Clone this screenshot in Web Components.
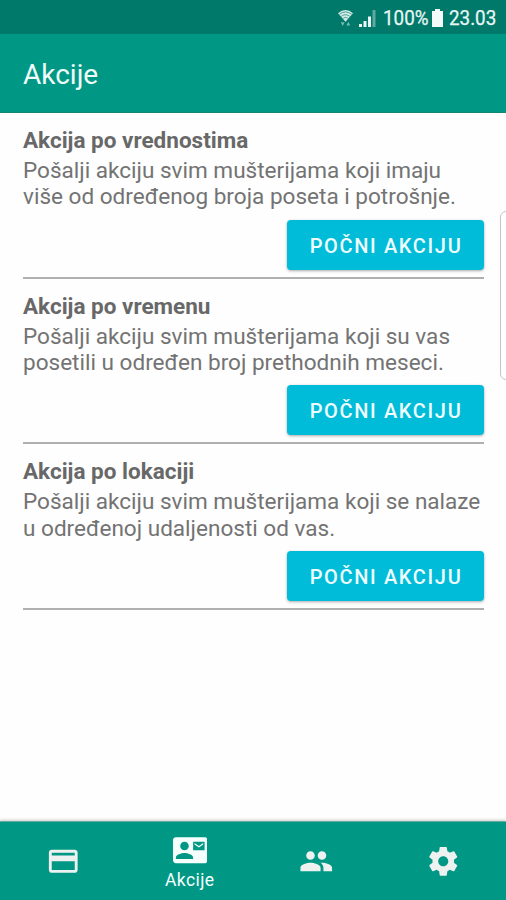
<!DOCTYPE html>
<html lang="sr-Latn">
<head>
<meta charset="utf-8">
<title>Akcije</title>
<style>
html,body{margin:0;height:100%;background:#fefefe;font-family:Roboto,"Noto Sans",sans-serif}
</style>
</head>
<body>
<promo-app></promo-app>
<script>
const define = (name, html) => customElements.define(name, class extends HTMLElement {
  constructor() {
    super();
    this.attachShadow({mode: 'open'}).innerHTML = html;
  }
});

define('status-bar', `<style>
:host{display:flex;height:34px;box-sizing:border-box;padding:3px 10px 0 0;justify-content:flex-end;align-items:center;background:#00796b;color:#e9f7f4;font-size:20px;line-height:31px}
svg{display:block;flex:none}
.wifi{margin-right:6px}.signal{margin-right:6px}.battery{margin:0 6px 0 3px}
.signal,.wifi,.battery{position:relative;top:-1px}
span{display:block;white-space:nowrap}
.pct{width:46px}.time{width:47px}
.pct b,.time b{display:block;font-weight:400;transform-origin:0 50%;-webkit-text-stroke:.25px currentColor}
.pct b{transform:scaleX(.94)}.time b{transform:scaleX(.94)}
</style>
<svg class="wifi" width="15" height="18" viewBox="0 0 16 18"><path d="M0 4Q8-3 16 4L8 13Z" fill="#d5ebe7"/><path d="M1.500 5Q8 0 14.500 5M3.500 7.200Q8 3.800 12.500 7.200M5.500 9.200Q8 7.500 10.500 9.200" fill="none" stroke="#00796b" stroke-width=".7"/><path d="M3 13.500h4L5 17.500zM9 17h4L11 13z" fill="#7bbbb2"/></svg>
<svg class="signal" width="18" height="18" viewBox="0 0 18 18"><path d="M0 15h3v3H0zM4.500 12h3v6h-3zM9 7.500h3V18H9z" fill="#e9f7f4"/><path d="M13.500 1h3v17h-3z" fill="#5eaaa0"/></svg>
<span class="pct"><b>100%</b></span>
<svg class="battery" width="11" height="18" viewBox="0 0 11 18"><path d="M3 0h5v2h3v16H0V2h3z" fill="#f2fbf9"/></svg>
<span class="time"><b>23.03</b></span>`);

define('title-bar', `<style>
:host{display:flex;align-items:center;height:79px;box-sizing:border-box;padding:3px 23px 0;background:#009885;border-bottom:1px solid #168773;color:#f1fbf9;font-size:28px}
</style><slot></slot>`);

define('action-button', `<style>
:host{display:block}
button{display:block;width:197px;height:50px;border:0;border-radius:4px;padding:2px 0 0 1px;background:#00bcd8;color:#effcff;font:500 20px Roboto,"Noto Sans",sans-serif;letter-spacing:1.650px;box-shadow:0 1px 3px #0005;white-space:nowrap}
</style><button><slot></slot></button>`);

define('promo-card', `<style>
:host{display:flex;flex-direction:column;height:165.670px;box-sizing:border-box;padding-top:13px;border-bottom:2px solid #b0b0b0;color:#737373}
h2{margin:0;font-size:22.500px;line-height:28px;font-weight:700;color:#686868;white-space:nowrap}
p{margin:4px 0 0;font-size:22.550px;line-height:26.300px;white-space:nowrap}
.action{display:flex;justify-content:flex-end;margin-top:auto;padding-bottom:7px}
</style><h2><slot name="title"></slot></h2><p><slot></slot></p><div class="action"><action-button>POČNI AKCIJU</action-button></div>`);

define('nav-item', `<style>
:host{display:flex;flex-direction:column;flex:1;align-items:center;justify-content:center;color:#edf1f0;font-size:17.500px;line-height:20px}
::slotted(svg){display:block;width:34.500px;height:34.500px;fill:currentColor}
:host([active]){color:#f5fffd;padding-top:1px}
.label{margin-top:3px;letter-spacing:.4px}
:host(:not([active])) .label{display:none}
</style><slot name="icon"></slot><div class="label"><slot></slot></div>`);

define('bottom-nav', `<style>
:host{display:flex;height:79px;background:#009885;border-top:1px solid #66aaa0;box-shadow:0 -1px 3px #0003;box-sizing:border-box}
</style><slot></slot>`);

define('edge-handle', `<style>
:host{position:absolute;right:-6px;top:211px;width:12px;height:169px;box-sizing:border-box;border:1px solid #c6c6c6;border-radius:6px;background:#fff}
</style>`);

define('promo-app', `<style>
:host{display:flex;flex-direction:column;height:900px;position:relative;overflow:hidden}
main{flex:1;padding:0 22px 0 23px}
</style>
<status-bar></status-bar>
<title-bar>Akcije</title-bar>
<main>
<promo-card><span slot="title">Akcija po vrednostima</span>Pošalji akciju svim mušterijama koji imaju<br>više od određenog broja poseta i potrošnje.</promo-card>
<promo-card><span slot="title">Akcija po vremenu</span>Pošalji akciju svim mušterijama koji su vas<br>posetili u određen broj prethodnih meseci.</promo-card>
<promo-card><span slot="title">Akcija po lokaciji</span>Pošalji akciju svim mušterijama koji se nalaze<br>u određenoj udaljenosti od vas.</promo-card>
</main>
<edge-handle></edge-handle>
<bottom-nav>
<nav-item><svg slot="icon" viewBox="0 0 24 24"><path d="M20 4H4c-1.110 0-1.990.89-1.990 2L2 18c0 1.110.89 2 2 2h16c1.110 0 2-.89 2-2V6c0-1.110-.89-2-2-2zm0 14H4v-6h16v6zm0-10H4V6h16v2z"/></svg></nav-item>
<nav-item active><svg slot="icon" viewBox="0 0 24 24"><path d="M21 8V7l-3 2-3-2v1l3 2 3-2zm1-5H2C.9 3 0 3.900 0 5v14c0 1.100.9 2 2 2h20c1.100 0 1.990-.9 1.990-2L24 5c0-1.100-.9-2-2-2zM8 6c1.660 0 3 1.340 3 3s-1.340 3-3 3-3-1.340-3-3 1.340-3 3-3zm6 12H2v-1c0-2 4-3.100 6-3.100s6 1.100 6 3.100v1zm8-6h-8V6h8v6z"/></svg>Akcije</nav-item>
<nav-item><svg slot="icon" viewBox="0 0 24 24"><path d="M16 11c1.660 0 2.990-1.340 2.990-3S17.660 5 16 5c-1.660 0-3 1.340-3 3s1.340 3 3 3zm-8 0c1.660 0 2.990-1.340 2.990-3S9.660 5 8 5C6.340 5 5 6.340 5 8s1.340 3 3 3zm0 2c-2.330 0-7 1.170-7 3.500V19h14v-2.500c0-2.330-4.670-3.500-7-3.500zm8 0c-.29 0-.62.02-.97.05 1.160.84 1.970 1.970 1.970 3.450V19h6v-2.500c0-2.330-4.670-3.500-7-3.500z"/></svg></nav-item>
<nav-item><svg slot="icon" viewBox="0 0 24 24"><path d="M19.430 12.980c.04-.32.07-.64.07-.98s-.03-.66-.07-.98l2.110-1.650c.19-.15.24-.42.12-.64l-2-3.460c-.12-.22-.39-.3-.61-.22l-2.490 1c-.52-.4-1.080-.73-1.690-.98l-.38-2.650C14.460 2.180 14.250 2 14 2h-4c-.25 0-.46.18-.49.42l-.38 2.650c-.61.25-1.170.59-1.690.98l-2.490-1c-.23-.09-.49 0-.61.22l-2 3.460c-.13.22-.07.49.12.64l2.110 1.650c-.04.32-.07.65-.07.98s.03.66.07.98l-2.110 1.650c-.19.15-.24.42-.12.64l2 3.460c.12.22.39.3.61.22l2.490-1c.52.4 1.080.73 1.690.98l.38 2.650c.03.24.24.42.49.42h4c.25 0 .46-.18.49-.42l.38-2.650c.61-.25 1.170-.59 1.690-.98l2.490 1c.23.09.49 0 .61-.22l2-3.460c.12-.22.07-.49-.12-.64l-2.110-1.650zM12 15.500c-1.930 0-3.500-1.570-3.500-3.500s1.570-3.500 3.500-3.500 3.500 1.570 3.500 3.500-1.570 3.500-3.500 3.500z"/></svg></nav-item>
</bottom-nav>`);
</script>
</body>
</html>
